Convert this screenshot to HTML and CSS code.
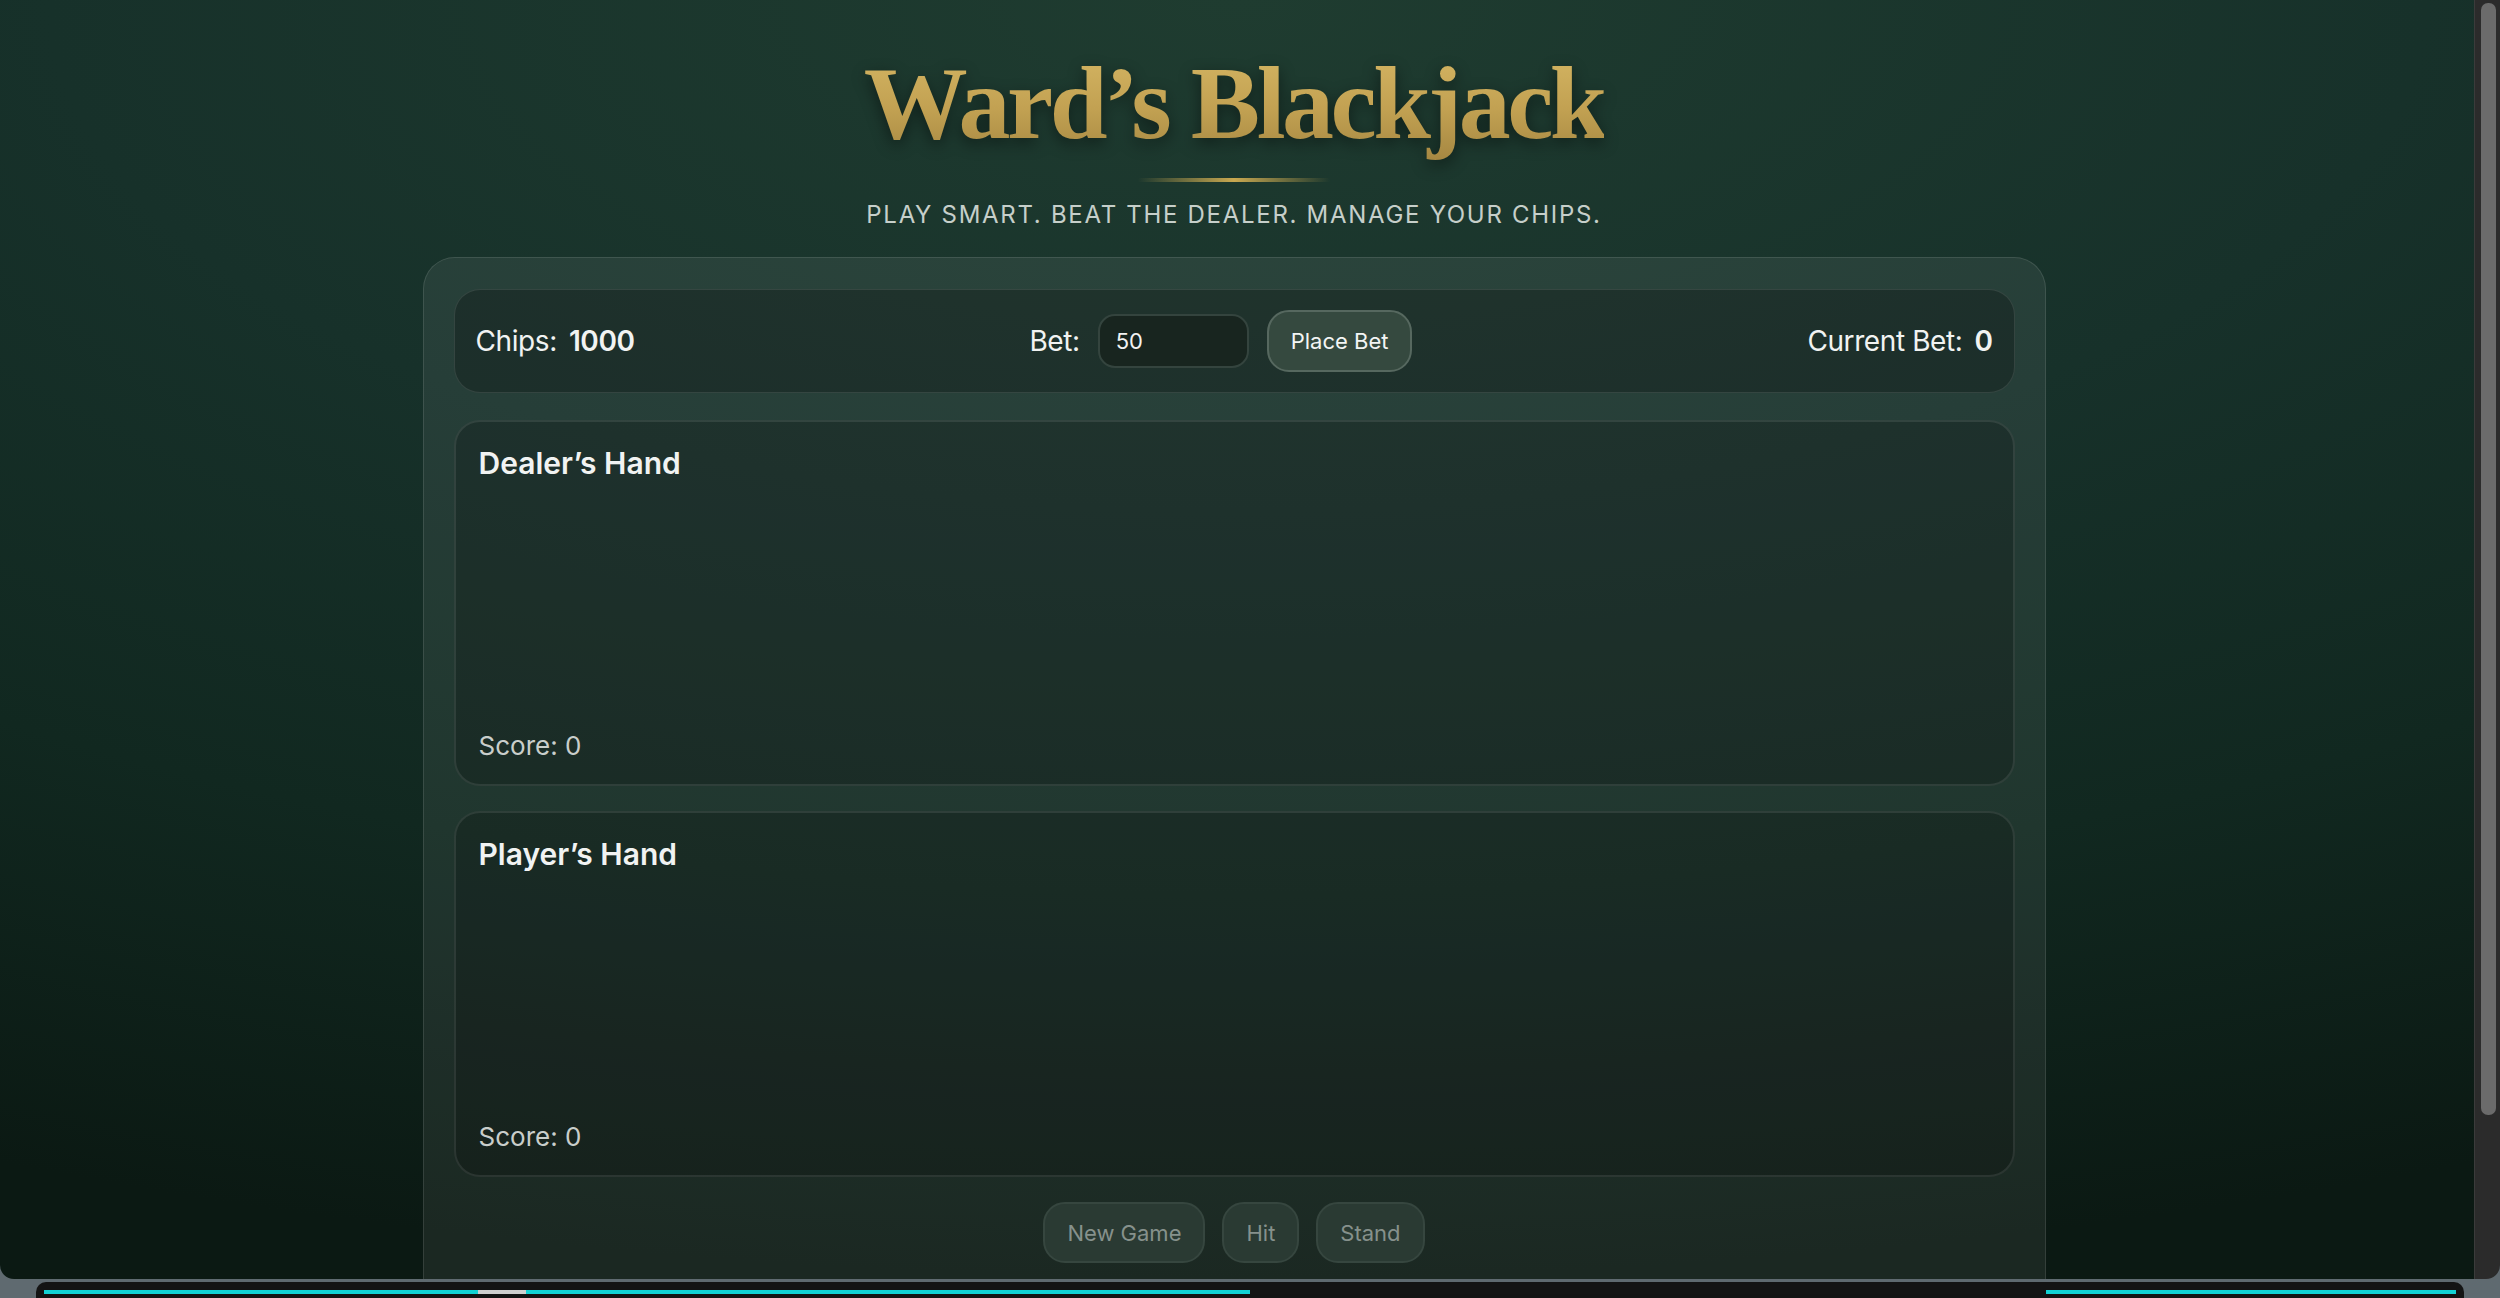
FILE: index.html
```html
<!DOCTYPE html>
<html lang="en">
  <head>
    <meta charset="UTF-8" />
    <meta name="viewport" content="width=device-width, initial-scale=1.0" />
    <title>Ward's Blackjack</title>
    <link rel="stylesheet" href="styles.css">
  </head>
  <body>
    <div class="window">
      <div class="page">
        <header class="masthead">
          <h1>Ward’s Blackjack</h1>
          <div class="rule"></div>
          <p class="tagline">Play smart. Beat the dealer. Manage your chips.</p>
        </header>

        <main class="table">
          <div class="stats">
            <div class="stat">
              <span class="stat-label">Chips:</span>
              <span class="stat-value" id="chips">1000</span>
            </div>
            <div class="bet-form">
              <label class="stat-label" for="bet">Bet:</label>
              <input id="bet" class="bet-input" type="number" value="50" />
              <button class="btn btn-bet">Place Bet</button>
            </div>
            <div class="stat">
              <span class="stat-label">Current Bet:</span>
              <span class="stat-value" id="current-bet">0</span>
            </div>
          </div>

          <section class="hand">
            <h2>Dealer’s Hand</h2>
            <div class="cards" id="dealer-cards"></div>
            <div class="score">Score: <span id="dealer-score">0</span></div>
          </section>

          <section class="hand">
            <h2>Player’s Hand</h2>
            <div class="cards" id="player-cards"></div>
            <div class="score">Score: <span id="player-score">0</span></div>
          </section>

          <div class="actions">
            <button class="btn btn-action" disabled>New Game</button>
            <button class="btn btn-action" disabled>Hit</button>
            <button class="btn btn-action" disabled>Stand</button>
          </div>
        </main>
      </div>
      <div class="scrollbar"><div class="thumb"></div></div>
    </div>
    <div class="dock"><div class="dock-bar"></div></div>
  </body>
</html>
```

FILE: styles.css
```css
html,
body {
  margin: 0;
  height: 1298px;
  overflow: hidden;
}
body {
  background: #5f6a70;
  font-family: Inter, "Noto Sans", sans-serif;
  color: #f1f3f2;
}
.window {
  display: flex;
  height: 1279px;
  border-radius: 0 0 14px 14px;
  overflow: hidden;
}
.page {
  flex: 1;
  padding: 46px 6px 0 0;
  background: radial-gradient(
    120% 100% at 50% 0%,
    #1f3c30 0%,
    #17312a 40%,
    #112820 70%,
    #0b1913 100%
  );
}
.scrollbar {
  width: 25px;
  background: #2b2b2b;
  border-left: 1px solid #3b3b3b;
}
.thumb {
  margin: 3px 4px 0 6px;
  height: 1112px;
  background: #6b6b6b;
  border-radius: 7px;
}
.dock {
  margin: 3px 36px 0;
  height: 16px;
  padding-top: 8px;
  box-sizing: border-box;
  background: #141414;
  border-radius: 10px 10px 0 0;
}
.dock-bar {
  height: 4px;
  margin: 0 8px;
  background: linear-gradient(
    90deg,
    #12d2d4 0%,
    #12d2d4 18%,
    #cfcfcf 18%,
    #cfcfcf 20%,
    #12d2d4 20%,
    #12d2d4 50%,
    #151515 50%,
    #151515 83%,
    #12d2d4 83%
  );
}

/* heading */
.masthead {
  text-align: center;
}
h1 {
  margin: 0;
  font-family: "Liberation Serif", "DejaVu Serif", serif;
  font-weight: 700;
  font-size: 104px;
  line-height: 1.1;
  letter-spacing: -3.5px;
  background: linear-gradient(180deg, #d6b764 0%, #c2a152 55%, #a68842 100%);
  -webkit-background-clip: text;
  background-clip: text;
  -webkit-text-fill-color: transparent;
  filter: drop-shadow(0 5px 8px rgba(0, 0, 0, 0.45));
  display: inline-block;
}
.rule {
  width: 192px;
  height: 4px;
  margin: 18px auto 0;
  background: linear-gradient(
    90deg,
    rgba(201, 168, 80, 0) 0%,
    #c9a850 50%,
    rgba(201, 168, 80, 0) 100%
  );
}
.tagline {
  margin: 19px 0 0;
  font-size: 24px;
  line-height: 1.2;
  letter-spacing: 1.7px;
  text-transform: uppercase;
  color: #c6cfca;
}

/* table */
.table {
  max-width: 1561px;
  margin: 27px auto 0;
  padding: 31px 30px 0;
  height: 1100px;
  background: rgba(255, 255, 255, 0.065);
  border: 1px solid rgba(255, 255, 255, 0.11);
  border-radius: 32px;
}
.stats {
  display: flex;
  justify-content: space-between;
  align-items: center;
  padding: 20px 21px;
  background: rgba(0, 0, 0, 0.24);
  border: 1px solid rgba(255, 255, 255, 0.1);
  border-radius: 26px;
}
.stat,
.bet-form {
  display: flex;
  align-items: center;
  font-size: 28px;
  letter-spacing: -0.4px;
}
.stat-label {
  font-weight: 400;
  font-size: 28px;
}
.stat-value {
  margin-left: 12px;
  font-weight: 600;
}
.bet-form {
  gap: 18px;
}
.bet-input {
  width: 151px;
  height: 54px;
  box-sizing: border-box;
  padding: 0 16px;
  font-family: inherit;
  font-size: 22px;
  color: #f1f3f2;
  background: #18251f;
  border: 2px solid #34443e;
  border-radius: 17px;
  outline: none;
  -moz-appearance: textfield;
}
.bet-input::-webkit-inner-spin-button,
.bet-input::-webkit-outer-spin-button {
  -webkit-appearance: none;
  margin: 0;
}
.btn {
  font-family: inherit;
  font-size: 22px;
  border-radius: 22px;
  cursor: pointer;
}
.btn-bet {
  height: 62px;
  padding: 0 22px;
  color: #f3f5f4;
  background: #35493f;
  border: 2px solid #56685f;
}

.hand {
  display: flex;
  flex-direction: column;
  height: 366px;
  box-sizing: border-box;
  margin-top: 27px;
  padding: 22px 23px 23px;
  background: rgba(0, 0, 0, 0.2);
  border: 2px solid rgba(255, 255, 255, 0.09);
  border-radius: 26px;
}
.hand + .hand {
  margin-top: 25px;
}
.hand h2 {
  margin: 0;
  font-size: 30px;
  font-weight: 600;
  line-height: 1.3;
}
.cards {
  flex: 1;
}
.score {
  font-size: 26px;
  line-height: 1.2;
  color: #c9cecb;
}

.actions {
  display: flex;
  justify-content: center;
  gap: 17px;
  margin-top: 25px;
}
.btn-action {
  height: 61px;
  padding: 0 22px;
  color: #86918c;
  background: #2a3a33;
  border: 2px solid #36463f;
}
```
